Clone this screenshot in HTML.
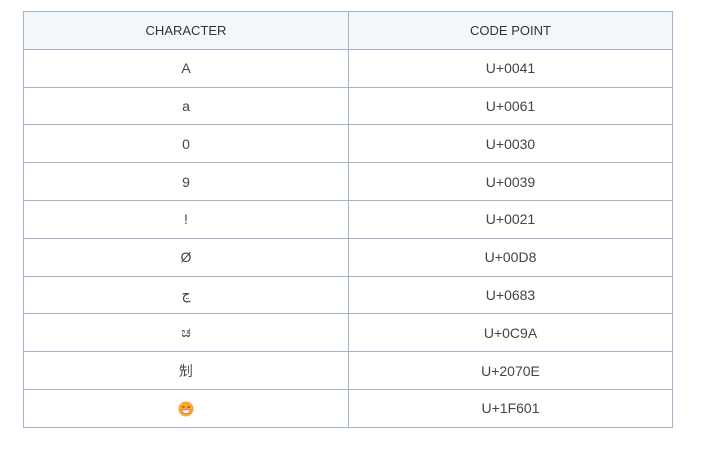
<!DOCTYPE html>
<html><head><meta charset="utf-8"><style>
html,body{margin:0;padding:0;background:#fff;width:705px;height:454px;overflow:hidden}
table{position:absolute;left:23px;top:11px;border-collapse:collapse;width:650px;font-family:"Liberation Sans","Noto Sans CJK SC",sans-serif;color:#333}
td,th{border:1px solid #a3b5cc;height:36.8px;padding:0;text-align:center;font-size:14px;font-weight:normal}
th{background:#f4f7fa;font-size:13px;color:#2b3440}
td:first-child,th:first-child{width:324px}
td{color:#444}
</style></head><body>
<table>
<tr><th>CHARACTER</th><th>CODE POINT</th></tr>
<tr><td>A</td><td>U+0041</td></tr>
<tr><td>a</td><td>U+0061</td></tr>
<tr><td>0</td><td>U+0030</td></tr>
<tr><td>9</td><td>U+0039</td></tr>
<tr><td>!</td><td>U+0021</td></tr>
<tr><td>Ø</td><td>U+00D8</td></tr>
<tr><td>ڃ</td><td>U+0683</td></tr>
<tr><td>ಚ</td><td>U+0C9A</td></tr>
<tr><td>𠜎</td><td>U+2070E</td></tr>
<tr><td><svg width="16" height="16" viewBox="0 0 16 16" style="vertical-align:middle"><circle cx="8" cy="8" r="7.5" fill="#f7a833"/><path d="M4 6.5q1.2-1.5 2.4 0M9.6 6.5q1.2-1.5 2.4 0" stroke="#6b3a12" stroke-width="1" fill="none"/><path d="M3.8 9h8.4q-.6 3.5-4.2 3.5T3.8 9z" fill="#fff" stroke="#c24a4a" stroke-width=".6"/></svg></td><td>U+1F601</td></tr>
</table>
</body></html>
